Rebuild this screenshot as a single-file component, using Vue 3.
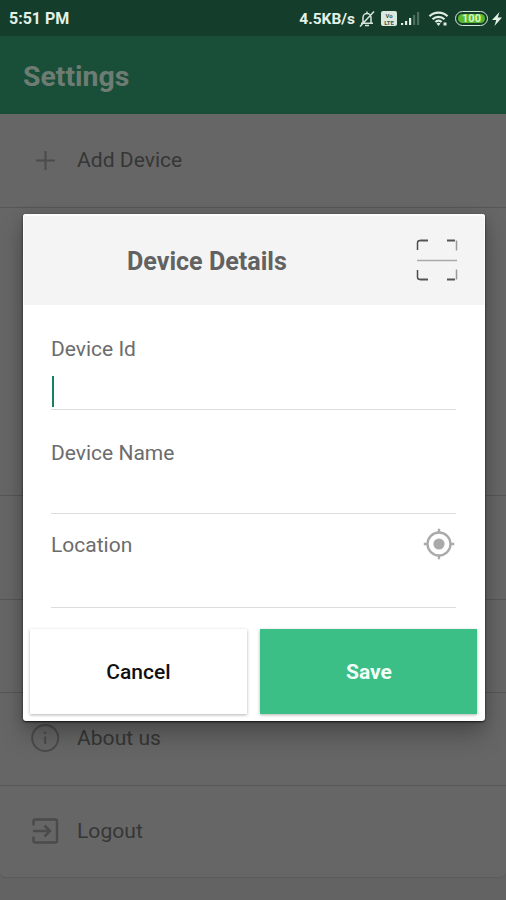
<script setup>
import { ref } from 'vue'

const rows = [
  { label: 'Add Device', icon: 'plus', size: 'first' },
  { label: '', icon: '', size: 'tall' },
  { label: '', icon: '', size: 'medium' },
  { label: '', icon: '', size: 'normal' },
  { label: 'About us', icon: 'info', size: 'normal' },
  { label: 'Logout', icon: 'exit', size: 'last' },
]

const deviceId = ref('')
const deviceName = ref('')
const deviceLocation = ref('')
</script>

<template>
  <div class="screen">
    <header class="status">
      <span class="clock">5:51 PM</span>
      <div class="indicators">
        <span class="speed">4.5KB/s</span>
        <svg class="bell" viewBox="0 0 16 18" width="16" height="18">
          <path d="M2 13.2h12M4 13V7.500a4 4 0 0 1 8 0V13M8 1.500v2M6 15.500h4M15 1.500 1 16.500" />
        </svg>
        <span class="volte"><b>Vo</b><b>LTE</b></span>
        <svg class="signal" viewBox="0 0 20 15" width="20" height="15">
          <path d="M1 12h2.200v2H1zM5 10h2.200v4H5zM9 7h2.200v7H9z" />
          <path class="weak" d="M13 4h2.200v10H13zM17 1h2.200v13H17z" />
        </svg>
        <svg class="wifi" viewBox="0 0 22 17" width="22" height="17">
          <path d="M1.500 6.200a13 13 0 0 1 18 0M4.500 9.200a8.700 8.700 0 0 1 12 0M7.400 12a4.400 4.400 0 0 1 6.200 0" />
          <path class="solid" d="m10.500 16-2-2.400a3 3 0 0 1 4 0zM15.500 12.500h3v3h-3z" />
        </svg>
        <span class="battery"><span class="charge">100</span></span>
        <svg class="bolt" viewBox="0 0 10 14" width="10" height="14">
          <path d="M7.500 0 0 8h4.200L2.500 14 10 5.600H5.800z" />
        </svg>
      </div>
    </header>

    <div class="appbar"><h1>Settings</h1></div>

    <main class="list">
      <div v-for="(row, i) in rows" :key="i" class="row" :class="row.size">
        <svg v-if="row.icon === 'plus'" class="icon" viewBox="0 0 30 30">
          <path d="M15.500 6v19M6 15.500h19" />
        </svg>
        <svg v-else-if="row.icon === 'info'" class="icon" viewBox="0 0 30 30">
          <circle cx="15.200" cy="15" r="13" />
          <path d="M15.200 13.500v7.500M15.200 8.800v2.200" />
        </svg>
        <svg v-else-if="row.icon === 'exit'" class="icon heavy" viewBox="0 0 30 30">
          <path d="M3.500 9.500V5A1.500 1.500 0 0 1 5 3.500h20.500A1.500 1.500 0 0 1 27 5v20a1.500 1.500 0 0 1-1.500 1.500H5A1.500 1.500 0 0 1 3.500 25v-4.500M3 15h16.500M14.500 9.500l5.500 5.500-5.500 5.500" />
        </svg>
        <span v-if="row.label" class="label">{{ row.label }}</span>
      </div>
    </main>

    <section class="dialog" role="dialog">
      <div class="head">
        <h2>Device Details</h2>
        <svg class="scan" viewBox="0 0 42 42" width="42" height="42">
          <path class="horizontal" d="M4 1.500h8M31 1.500h8M4 40.500h8M31 40.500h8" />
          <path class="left" d="M4 1.500Q1.500 1.500 1.500 4v7M1.500 31v7q0 2.500 2.500 2.500" />
          <path class="right" d="M40.500 1.500v10M40.500 30.500v10" />
          <path class="beam" d="M1 21.500h40" />
        </svg>
      </div>
      <form class="fields" @submit.prevent>
        <label class="field id">
          <span>Device Id</span>
          <div class="entry"><i class="caret"></i><input v-model="deviceId" /></div>
        </label>
        <label class="field name">
          <span>Device Name</span>
          <div class="entry"><input v-model="deviceName" /></div>
        </label>
        <label class="field location">
          <div class="caption">
            <span>Location</span>
            <svg class="locate" viewBox="0 0 32 32" width="32" height="32">
              <circle class="ring" cx="16" cy="16" r="11.500" />
              <circle class="dot" cx="16" cy="16" r="5.600" />
              <path d="M16 .8v4M16 27.200v4M.8 16h4M27.200 16h4" />
            </svg>
          </div>
          <div class="entry"><input v-model="deviceLocation" /></div>
        </label>
      </form>
      <div class="actions">
        <button class="cancel" type="button">Cancel</button>
        <button class="save" type="button">Save</button>
      </div>
    </section>
  </div>
</template>

<style>
body {
  margin: 0;
}
</style>

<style scoped>
* {
  box-sizing: border-box;
}
.screen {
  position: relative;
  width: 506px;
  height: 900px;
  overflow: hidden;
  background: #636363;
  font-family: Roboto, sans-serif;
}
.status {
  height: 36px;
  padding: 1px 4px 0 9px;
  display: flex;
  align-items: center;
  justify-content: space-between;
  background: #153d2b;
  color: #e3f1e8;
}
.clock {
  font-size: 16px;
  font-weight: 700;
}
.indicators {
  display: flex;
  align-items: center;
}
.speed {
  font-size: 15.5px;
  font-weight: 700;
  margin-right: 4px;
}
.bell {
  fill: none;
  stroke: #d5e5dc;
  stroke-width: 1.500;
  margin-right: 6px;
}
.volte {
  width: 16px;
  height: 15px;
  display: flex;
  flex-direction: column;
  align-items: center;
  justify-content: center;
  border-radius: 2px;
  background: #dce9e1;
  color: #3c5c4c;
  font-size: 6px;
  line-height: 7px;
  margin-right: 3px;
}
.volte b {
  display: block;
}
.signal {
  fill: #e3f1e8;
  margin-right: 8px;
}
.signal .weak {
  fill: #4d6e5d;
}
.wifi {
  fill: none;
  stroke: #dfece4;
  stroke-width: 2.200;
  margin-right: 5px;
}
.wifi .solid {
  fill: #dfece4;
  stroke: none;
}
.battery {
  width: 33px;
  height: 15px;
  padding: 2px;
  border: 1.5px solid #d5eadb;
  border-radius: 8px;
  display: flex;
  margin-right: 4px;
}
.charge {
  flex: 1;
  border-radius: 5px;
  background: #58b82c;
  color: #d6f8c6;
  font-size: 11px;
  font-weight: 700;
  line-height: 9px;
  text-align: center;
}
.bolt {
  fill: #e3f1e8;
}
.appbar {
  height: 78px;
  padding: 3px 23px 0;
  display: flex;
  align-items: center;
  background: #194f38;
}
h1 {
  margin: 0;
  font-size: 28.400px;
  font-weight: 700;
  color: #6e7c74;
}
.list {
  background: #666;
  border-radius: 0 0 5px 5px;
  box-shadow: 0 1px 1px rgba(0, 0, 0, 0.08);
}
.row {
  height: 93px;
  padding-left: 30px;
  padding-bottom: 3px;
  display: flex;
  align-items: center;
  gap: 17px;
  border-bottom: 1px solid #565656;
}
.row.first {
  height: 94px;
  padding-bottom: 2px;
}
.row.tall {
  height: 288px;
}
.row.medium {
  height: 104px;
}
.row.last {
  height: 91px;
  padding-bottom: 2px;
  border-bottom: 0;
}
.icon {
  width: 30px;
  height: 30px;
  fill: none;
  stroke: #4b4b4b;
  stroke-width: 2;
}
.icon.heavy {
  stroke-width: 2.500;
}
.label {
  font-size: 21.100px;
  color: #363636;
}
/* The dialog floats over the dimmed settings list. */
.dialog {
  position: absolute;
  left: 23px;
  top: 214px;
  width: 461.500px;
  height: 507px;
  display: flex;
  flex-direction: column;
  background: #fff;
  border-radius: 3px;
  box-shadow: 0 1px 2px rgba(0, 0, 0, 0.75), 0 14px 24px rgba(0, 0, 0, 0.25), 0 2px 12px rgba(0, 0, 0, 0.14);
}
.head {
  height: 91px;
  padding: 0 26px 1px 103px;
  display: flex;
  align-items: center;
  justify-content: space-between;
  background: #f4f4f4;
  border-radius: 3px 3px 0 0;
  border: solid #fcfcfc;
  border-width: 2px 1px 0 1px;
}
h2 {
  margin: 0;
  padding-top: 2px;
  font-size: 25.100px;
  font-weight: 700;
  color: #626262;
}
.scan {
  fill: none;
}
.scan .horizontal {
  stroke: #555;
  stroke-width: 2;
}
.scan .left {
  stroke: #4c4c4c;
  stroke-width: 1.500;
}
.scan .right {
  stroke: #999;
  stroke-width: 1.500;
}
.scan .beam {
  stroke: #aaa;
  stroke-width: 1.500;
}
.fields {
  flex: 1;
  padding: 0 28.500px 0 28px;
}
.field {
  display: flex;
  flex-direction: column;
  font-size: 21px;
  line-height: 26px;
  color: #6c6c6c;
}
.field.id {
  height: 105px;
  padding-top: 31px;
}
.field.name {
  height: 104px;
  padding-top: 30px;
}
.field.location {
  height: 94px;
  padding-top: 14px;
}
.caption {
  height: 32px;
  display: flex;
  align-items: center;
  justify-content: space-between;
}
.caption span {
  padding-top: 2px;
}
.entry {
  flex: 1;
  display: flex;
  align-items: flex-end;
  border-bottom: 1.500px solid #dcdcdc;
}
input {
  flex: 1;
  height: 28px;
  padding: 0;
  border: 0;
  outline: 0;
  background: transparent;
  font: inherit;
}
.caret {
  width: 2px;
  height: 31px;
  margin-bottom: 2px;
  margin-left: 0.500px;
  background: #168263;
}
.locate {
  margin-right: 1px;
  fill: none;
  stroke: #aaa;
  stroke-width: 2.300;
}
.locate .dot {
  fill: #aaa;
  stroke: none;
}
.actions {
  height: 92px;
  padding: 0 7.500px 7px 7px;
  display: grid;
  grid-template-columns: 1fr 1fr;
  gap: 13px;
}
button {
  border: 0;
  padding: 1px 0 0;
  font: 500 21px Roboto, sans-serif;
  box-shadow: 0 1px 3px rgba(0, 0, 0, 0.3);
}
.cancel {
  background: #fff;
  color: #111;
}
.save {
  padding-left: 1px;
  background: #3bbf87;
  color: #f2fff9;
  font-weight: 700;
}
</style>
